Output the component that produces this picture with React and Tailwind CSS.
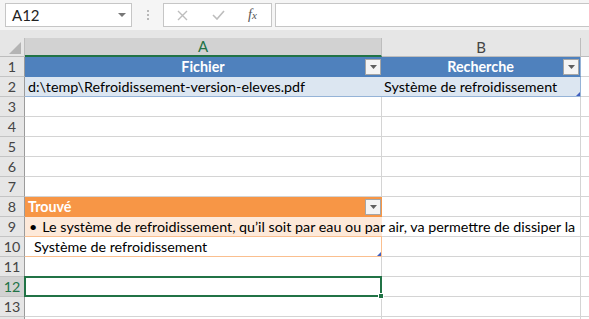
import React from 'react';

const cols = 'grid grid-cols-[25px_357px_199px_1fr] grid-rows-[20px]';

const Filter = () => (
  <span className="flex h-4 w-4 shrink-0 items-center justify-center border border-solid border-[#a6a6a6] bg-[#f4f4f4]">
    <svg width="7" height="4" viewBox="0 0 7 4">
      <path d="M0 0h7L3.5 4z" fill="#5f5f5f" />
    </svg>
  </span>
);

const Corner = () => (
  <svg className="absolute right-0 bottom-0" width="4" height="4" viewBox="0 0 4 4">
    <path d="M4 0v4H0z" fill="#3f5fbf" />
  </svg>
);

const Empty = () => <div className="border-r border-b border-solid border-[#d4d4d4] bg-white" />;
const Tail = () => <div className="border-b border-solid border-[#d4d4d4] bg-white" />;

const Row = ({ n, selected, children }) => (
  <div className={`${cols} h-5`}>
    <div
      className={
        selected
          ? 'flex items-center justify-center border-r border-b border-solid border-r-[#9b9b9b] border-b-[#c4c4c4] bg-[#d2d2d2] text-[#217346]'
          : 'flex items-center justify-center border-r border-b border-solid border-r-[#9b9b9b] border-b-[#c4c4c4] bg-[#e6e6e6] text-[#444]'
      }
    >
      {n}
    </div>
    {children}
  </div>
);

const App = () => {
  return (
    <div className="h-[319px] w-[589px] overflow-hidden bg-white font-['Lato',sans-serif] text-[14.3px] leading-[19px] text-black">
      {/* Formula bar */}
      <div className="flex h-[30px] items-start bg-[#f5f5f5] pt-[3px]">
        <div className="ml-[5px] flex h-6 w-[127px] items-center border border-solid border-[#c6c6c6] bg-white pl-[6px] pr-[5px] text-[15px] text-[#222]">
          <span>A12</span>
          <svg className="ml-auto" width="8" height="4" viewBox="0 0 8 4">
            <path d="M0 0h8L4 4z" fill="#777" />
          </svg>
        </div>
        <div className="ml-[15px] flex h-6 flex-col items-center justify-center gap-[2px]">
          <span className="h-[2px] w-[2px] bg-[#b8b8b8]" />
          <span className="h-[2px] w-[2px] bg-[#b8b8b8]" />
          <span className="h-[2px] w-[2px] bg-[#b8b8b8]" />
        </div>
        <div className="ml-[14px] flex h-6 w-[109px] items-center border border-solid border-[#c6c6c6] bg-white">
          <svg className="ml-[13px]" width="11" height="11" viewBox="0 0 11 11">
            <path d="M1 1l9 9M10 1l-9 9" stroke="#bdbdbd" strokeWidth="1.4" />
          </svg>
          <svg className="ml-[24px]" width="13" height="10" viewBox="0 0 13 10">
            <path d="M1 5l4 4 7-8" stroke="#bdbdbd" strokeWidth="1.6" fill="none" />
          </svg>
          <span className="ml-[23px] font-['Liberation_Serif',serif] text-[14px] italic text-[#555]">
            f<span className="text-[11px]">x</span>
          </span>
        </div>
        <div className="ml-[3px] h-6 flex-1 border border-r-0 border-solid border-[#c6c6c6] bg-white" />
      </div>
      <div className="h-2 bg-[#e6e6e6]" />

      {/* Column headers */}
      <div className="grid h-[19px] grid-cols-[25px_357px_199px_1fr] grid-rows-[19px] text-[15px] leading-[17px] text-[#444]">
        <div className="flex items-end justify-end border-r border-b border-solid border-[#bdbdbd] bg-[#e6e6e6] pr-[3px] pb-[2px]">
          <svg width="12" height="12" viewBox="0 0 12 12">
            <path d="M12 0v12H0z" fill="#b4b4b4" />
          </svg>
        </div>
        <div className="flex items-center justify-center border-r border-b-2 border-solid border-r-[#bdbdbd] border-b-[#217346] bg-[#d2d2d2] text-[#217346]">
          A
        </div>
        <div className="flex items-center justify-center border-r border-b border-solid border-[#bdbdbd] bg-[#e6e6e6]">B</div>
        <div className="border-b border-solid border-[#bdbdbd] bg-[#e6e6e6]" />
      </div>

      {/* Table 1 */}
      <Row n="1">
        <div className="flex items-center border-b border-solid border-[#4f81bd] bg-[#4f81bd] pr-[1px] font-bold text-white">
          <span className="w-4" />
          <span className="flex-1 text-center">Fichier</span>
          <Filter />
        </div>
        <div className="flex items-center border-r border-b border-solid border-b-[#4f81bd] border-r-[#95b3d7] bg-[#4f81bd] pr-[1px] font-bold text-white">
          <span className="w-4" />
          <span className="flex-1 text-center">Recherche</span>
          <Filter />
        </div>
        <Tail />
      </Row>
      <Row n="2">
        <div className="flex items-center border-b border-solid border-[#95b3d7] bg-[#dce6f1] pl-[3px] whitespace-nowrap">
          d:\temp\Refroidissement-version-eleves.pdf
        </div>
        <div className="relative flex items-center border-r border-b border-solid border-[#95b3d7] bg-[#dce6f1] pl-[2px] whitespace-nowrap">
          Système de refroidissement
          <Corner />
        </div>
        <Tail />
      </Row>
      {['3', '4', '5', '6', '7'].map((n) => (
        <Row key={n} n={n}>
          <Empty />
          <Empty />
          <Tail />
        </Row>
      ))}

      {/* Table 2 */}
      <Row n="8">
        <div className="flex items-center border-b border-solid border-[#f79646] bg-[#f79646] pl-[3px] pr-[1px] font-bold text-white">
          <span className="flex-1">Trouvé</span>
          <Filter />
        </div>
        <Empty />
        <Tail />
      </Row>
      <Row n="9">
        <div className="relative z-10 flex items-center border-b border-solid border-[#fabf8f] bg-[#fde9d9] pl-[4px] whitespace-nowrap">
          <span>•</span>
          <span className="ml-[5px]">Le système de refroidissement, qu’il soit par eau ou par air, va permettre de dissiper la</span>
        </div>
        <Empty />
        <Tail />
      </Row>
      <Row n="10">
        <div className="relative flex items-center border-r border-b border-solid border-[#fabf8f] bg-white pl-[9px] whitespace-nowrap">
          Système de refroidissement
          <Corner />
        </div>
        <Empty />
        <Tail />
      </Row>
      <Row n="11">
        <Empty />
        <Empty />
        <Tail />
      </Row>
      <Row n="12" selected>
        <div className="relative border-r border-b border-solid border-[#d4d4d4] bg-white">
          <div className="absolute top-[-1px] right-[-1px] bottom-[-1px] left-[-1px] z-20 border-2 border-solid border-[#217346]" />
          <div className="absolute right-[-3px] bottom-[-3px] z-30 h-[6px] w-[6px] border border-solid border-white bg-[#217346]" />
        </div>
        <Empty />
        <Tail />
      </Row>
      <Row n="13">
        <Empty />
        <Empty />
        <Tail />
      </Row>
      {/* row 14 is only a sliver at the bottom edge */}
      <Row n="">
        <Empty />
        <Empty />
        <Tail />
      </Row>
    </div>
  );
};

export default App;
